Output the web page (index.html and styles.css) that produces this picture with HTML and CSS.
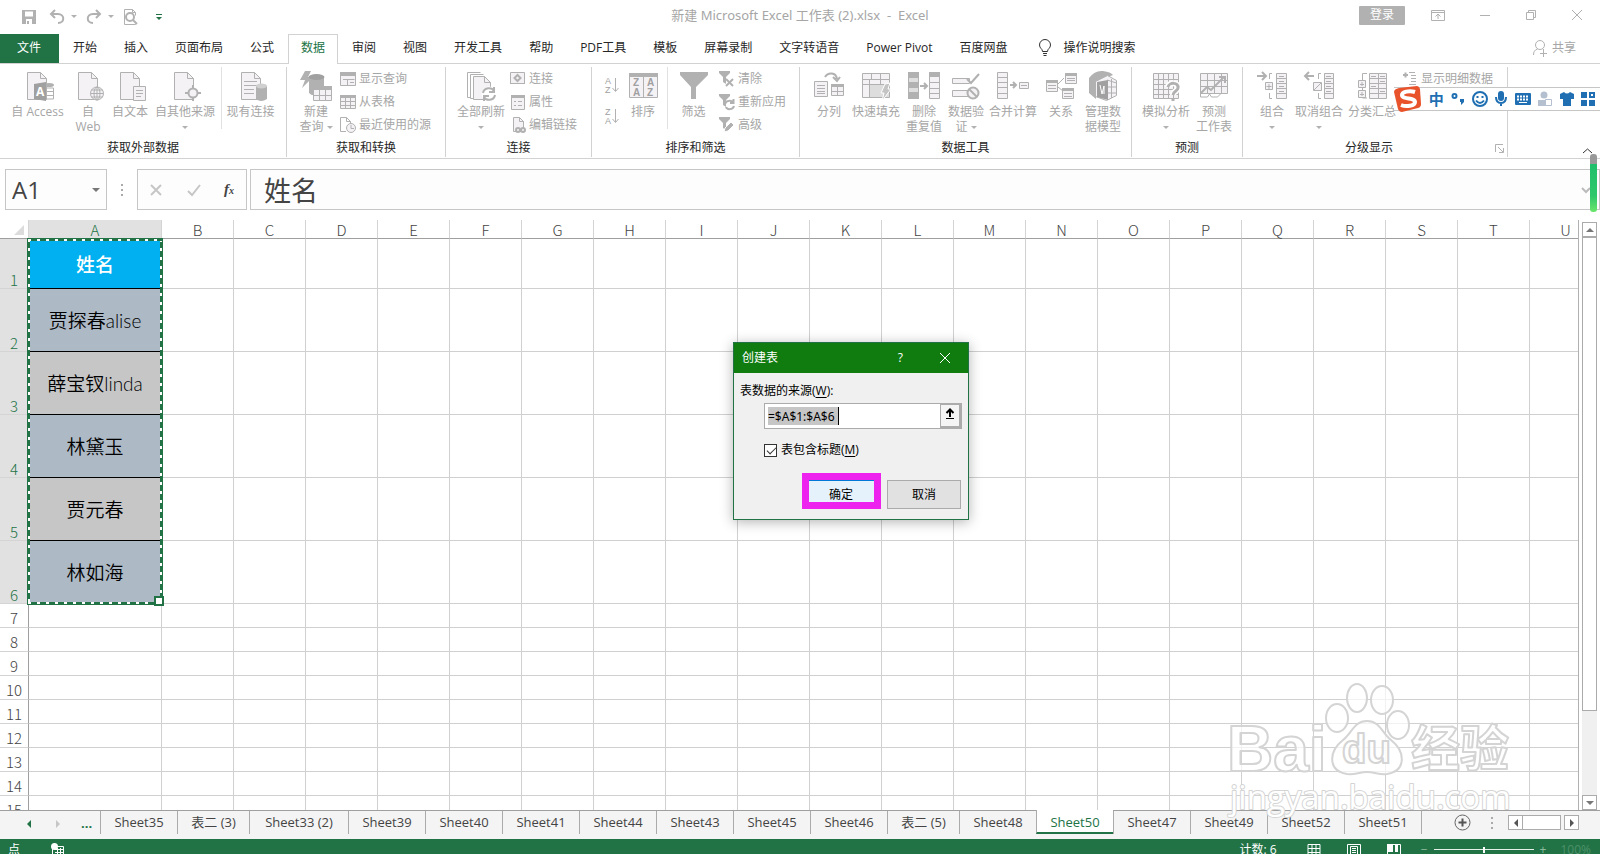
FILE: index.html
```
<!DOCTYPE html>
<html lang="zh-CN">
<head>
<meta charset="UTF-8">
<meta name="viewport" content="width=device-width, initial-scale=1">
<title>新建 Microsoft Excel 工作表 (2).xlsx - Excel</title>
<link rel="stylesheet" href="styles.css">
</head>
<body>

<!-- shared icon shapes -->
<svg class="sprite" aria-hidden="true">
  <symbol id="page" viewBox="0 0 30 30"><path class="pale" d="M2.500 1.500h13l6 6v21h-19z"/><path class="ln" d="M15.500 1.500v6h6"/></symbol>
  <symbol id="grid-sm" viewBox="0 0 16 16"><path class="pale" d="M.5 1.500h15v13H.5z"/><path class="fl" d="M0 1h16v3H0z"/><path class="ln" d="M0 7.500h16M0 11.500h16M5.500 4v11M10.500 4v11"/></symbol>
  <symbol id="funnel-sm" viewBox="0 0 16 16"><path class="fl" d="M0 0h11v2L7 6v7l-3-2V6L0 2z"/></symbol>
</svg>

<header class="titlebar">
  <div class="quick">
    <button aria-label="保存"><svg width="16" height="16"><path class="fl" d="M1 1h14v14H1zM4 2.500v5h8v-5zM5 10v5h6v-5z" fill-rule="evenodd"/><path class="fl" d="M6 12h2v3H6z"/></svg></button>
    <button aria-label="撤消"><svg width="16" height="16"><path class="ln bold" d="M6 1 2 5l4 4M2 5h7c7 0 7 9 0 9"/></svg></button>
    <i class="caret"></i>
    <button aria-label="恢复"><svg width="16" height="16"><path class="ln bold" d="m10 1 4 4-4 4M14 5H7c-7 0-7 9 0 9"/></svg></button>
    <i class="caret"></i>
    <button aria-label="打印预览"><svg width="16" height="18"><path class="ln" d="M13.500 15.500v1H2.500v-15h8l3 3v3M10.500 1.500v3h3"/><circle class="ln bold" cx="8" cy="9" r="4"/><path class="ln bold" d="m11 12 4 4"/></svg></button>
    <button aria-label="自定义快速访问工具栏"><svg width="8" height="10"><path d="M1 2.500h6" stroke="#217346"/><path d="M1 5h6L4 8z" fill="#217346"/></svg></button>
  </div>
  <h1>新建 Microsoft Excel 工作表 (2).xlsx &nbsp;- &nbsp;Excel</h1>
  <div class="window-controls">
    <button class="login">登录</button>
    <button aria-label="功能区显示选项"><svg width="14" height="12"><path class="ln" d="M.5 1.500h13v10H.5zM.5 3.500h13M7 10V5M4.500 7.500 7 5l2.500 2.500"/></svg></button>
    <button aria-label="最小化"><svg width="12" height="12"><path class="ln" d="M1 6.500h10"/></svg></button>
    <button aria-label="还原"><svg width="12" height="12"><path class="ln" d="M1.500 3.500h7v7h-7zM3.500 3V1.500h7v7H9"/></svg></button>
    <button aria-label="关闭"><svg width="12" height="12"><path class="ln" d="m1 1 10 10M11 1 1 11"/></svg></button>
  </div>
</header>

<nav class="tabs">
  <a class="file" href="#">文件</a>
  <a href="#">开始</a>
  <a href="#">插入</a>
  <a href="#">页面布局</a>
  <a href="#">公式</a>
  <a class="active" href="#">数据</a>
  <a href="#">审阅</a>
  <a href="#">视图</a>
  <a href="#">开发工具</a>
  <a href="#">帮助</a>
  <a href="#">PDF工具</a>
  <a href="#">模板</a>
  <a href="#">屏幕录制</a>
  <a href="#">文字转语音</a>
  <a href="#">Power Pivot</a>
  <a href="#">百度网盘</a>
  <a class="tell" href="#"><svg width="14" height="18"><path d="M4.500 12.500c0-3-3-3-3-6.500a5.500 5.500 0 0 1 11 0c0 3.500-3 3.500-3 6.500zM5 14.500h4M5.500 16.500h3" fill="none" stroke="#333"/></svg>操作说明搜索</a>
  <a class="share" href="#"><svg width="16" height="18"><circle class="ln" cx="8" cy="6" r="4.500"/><path class="ln" d="M1.500 16c0-3 1-5 4-6M11 10l1 1M8 14.500h7M11.500 11v7"/></svg>共享</a>
</nav>

<section class="ribbon">
  <div class="group external">
    <div class="items">
      <button class="big"><svg width="26" height="30"><use href="#page" width="30" height="30"/><ellipse class="fl" cx="24" cy="14" rx="5" ry="2"/><path class="ln" d="M20 17h8.500v11H20M20 20.500h8M20 24.500h8"/><path class="dk" d="m9 13 12-2v19L9 28z"/><text x="11" y="25" class="letter">A</text></svg><span>自 Access</span></button>
      <button class="big"><svg width="26" height="30"><use href="#page" x="1" width="30" height="30"/><circle class="pale" cx="22" cy="22.500" r="6.500"/><ellipse class="ln" cx="22" cy="22.500" rx="3" ry="6.500"/><path class="ln" d="M15.500 22.500h13M16.500 19h11M16.500 26h11M22 16v13"/></svg><span>自<br>Web</span></button>
      <button class="big"><svg width="26" height="30"><use href="#page" x="1" width="30" height="30"/><path class="pale" d="M16.500 15.500h12v14h-12z"/><path class="ln" d="M19 19.500h7M19 22.500h7M19 25.500h5"/></svg><span>自文本</span></button>
      <button class="big"><svg width="26" height="30"><use href="#page" width="30" height="30"/><circle class="pale thick" cx="21" cy="22" r="4.500"/><path class="ln thick" d="M21 14v3M21 27v3M13 22h3M26 22h3"/></svg><span>自其他来源</span><i class="caret"></i></button>
      <button class="big split"><svg width="26" height="30"><use href="#page" x="1" width="30" height="30"/><path class="ln" d="M6 10.500h13M6 14.500h13M6 18.500h10M6 22.500h10"/><path class="fl" d="M18 15v13q5 4 11 0V15z"/><ellipse cx="23.500" cy="15" rx="5.500" ry="2.500" fill="#d0d0d0"/></svg><span>现有连接</span></button>
    </div>
    <h2>获取外部数据</h2>
  </div>

  <div class="group transform">
    <div class="items">
      <button class="big"><svg width="34" height="30"><path class="fl" d="M6 0h6L9 6h5L3 17l3-8H1z"/><path class="fl" d="M10 7v15q3 3 6 2V15h9V7z"/><ellipse cx="17.500" cy="6" rx="8" ry="3" fill="#a0a0a0"/><path class="pale" d="M14.500 15.500h18v14h-18z"/><path class="fl" d="M14 15h19v4H14z"/><path class="ln" d="M14 24.500h19M20.500 19v11M26.500 19v11"/></svg><span>新建<br>查询 <i class="caret"></i></span></button>
      <div class="stack">
        <button><svg width="16" height="16"><path class="pale" d="M.5 1.500h15v13H.5z"/><path class="fl" d="M0 1h16v4H0z"/><path class="ln" d="M3 8.500h5M7.500 14V8.500h7M10 11.500h4"/></svg>显示查询</button>
        <button><svg width="16" height="16"><use href="#grid-sm"/></svg>从表格</button>
        <button><svg width="16" height="16"><path class="ln" d="M6 14.500H.5V.5h6l4 4v3M6.500.5v4h4"/><circle class="pale" cx="11" cy="11" r="4.500"/><path class="ln" d="M11 8v3.500h3"/></svg>最近使用的源</button>
      </div>
    </div>
    <h2>获取和转换</h2>
  </div>

  <div class="group links">
    <div class="items">
      <button class="big"><svg width="30" height="30"><path class="ln" d="M4 26.500H1.500v-25h13M7 27.500H4.500v-24h13"/><path class="pale" d="M7.500 5.500h11l6 6v17h-17z"/><path class="ln" d="M18.500 5.500v6h6"/><circle cx="23" cy="23" r="7.500" fill="#fff"/><path class="ln thick" d="M17 22c1-6 9-6 11-2M29 24c-1 6-9 6-11 2M28 16v5h-5M18 30v-5h5"/></svg><span>全部刷新</span><i class="caret"></i></button>
      <div class="stack">
        <button><svg width="16" height="16"><path class="pale" d="M.5 1.500h14v11H.5z"/><path class="ln thick" d="m7.500 4 3 3-3 3-3-3z"/><path class="ln" d="M0 12.500h15"/></svg>连接</button>
        <button><svg width="16" height="16"><path class="pale" d="M1.500 1.500h13v14h-13z"/><path class="fl" d="M1 1h14v3H1z"/><path class="ln" d="M4 7.500h2M8 7.500h4M4 11.500h2M8 11.500h4"/></svg>属性</button>
        <button><svg width="16" height="16"><path class="pale" d="M3.500.5h6l4 4v10h-10z"/><path class="ln" d="M9.500.5v4h4"/><circle class="pale thick" cx="8" cy="13" r="2"/><circle class="pale thick" cx="13" cy="13" r="2"/></svg>编辑链接</button>
      </div>
    </div>
    <h2>连接</h2>
  </div>

  <div class="group sort">
    <div class="items">
      <div class="sorters">
        <button aria-label="升序"><svg width="16" height="18"><text x="1" y="8" class="az">A</text><text x="1" y="17" class="az">Z</text><path class="ln" d="M11.500 2v13M8.500 12l3 3.500 3-3.500"/></svg></button>
        <button aria-label="降序"><svg width="16" height="18"><text x="1" y="8" class="az">Z</text><text x="1" y="17" class="az">A</text><path class="ln" d="M11.500 2v13M8.500 12l3 3.500 3-3.500"/></svg></button>
      </div>
      <button class="big"><svg width="30" height="30"><path class="pale" d="M1.500 2.500h28v24h-28z"/><path class="fl" d="M1 2h29v4H1z"/><path class="ln" d="M15.500 6v20"/><text x="5" y="15" class="az lg">Z</text><text x="5" y="25" class="az lg">A</text><text x="19" y="15" class="az lg">A</text><text x="19" y="25" class="az lg">Z</text></svg><span>排序</span></button>
      <button class="big split"><svg width="30" height="30"><path class="fl" d="M1 1h28v3L17 16v12h-5V16L1 4z"/></svg><span>筛选</span></button>
      <div class="stack">
        <button><svg width="16" height="16"><use href="#funnel-sm"/><path class="ln thick" d="m7 8 7 7M14 8l-7 7"/></svg>清除</button>
        <button><svg width="16" height="16"><use href="#funnel-sm"/><path class="ln thick" d="M6 10c1-4 7-4 8-1M15 12c-1 4-7 4-8 1M14.500 5v4H11"/></svg>重新应用</button>
        <button><svg width="16" height="16"><use href="#funnel-sm"/><path d="m5 15 1-4 6-6 3 3-6 6z" class="fl" stroke="#fff"/></svg>高级</button>
      </div>
    </div>
    <h2>排序和筛选</h2>
  </div>

  <div class="group tools">
    <div class="items">
      <button class="big"><svg width="30" height="30"><path class="ln thick" d="M11 6c3-5 11-5 12 2M19 6l4 4 3-4"/><path class="pale" d="M.5 10.500h13v15H.5z"/><path class="ln" d="M3 14.500h8M3 17.500h8M3 20.500h8M3 22.500h8"/><path class="pale" d="M17.500 13.500h12v11h-12z"/><path class="fl" d="M17 13h13v3H17z"/><path class="ln" d="M17 20.500h13M23.500 16v9"/></svg><span>分列</span></button>
      <button class="big"><svg width="30" height="30"><path class="pale" d="M1.500 2.500h27v24h-27z"/><path class="ln" d="M1 8.500h28M1 13.500h28M10.500 2v6M19.500 2v6M8.500 8v18M19.500 8v6"/><path fill="#ddd" d="M9 14h19v12H9z"/><path d="m24 13 5-1-2 6h3L21 30l2-8h-3z" fill="#c4c4c4" stroke="#fff"/></svg><span>快速填充</span></button>
      <button class="big"><svg width="32" height="30"><path class="fl" d="M0 1h11v27H0z"/><path d="M1 7h9v4H1zM1 17h9v4H1z" fill="#dedede"/><path class="pale" d="M21.500 1.500h10v26h-10z"/><path class="fl" d="M21 1h11v5H21z"/><path class="ln" d="M21 11.500h11M21 17.500h11M21 22.500h11"/><path class="ln thick" d="M12 15h7M16 12l3 3-3 3"/></svg><span>删除<br>重复值</span></button>
      <button class="big"><svg width="30" height="30"><path class="pale" d="M1.500 7.500h17v5h-17zM1.500 19.500h17v6h-17z"/><path class="ln bold" d="m16 8 4 4 8-9"/><circle class="pale thick" cx="22" cy="22" r="5.500"/><path class="ln thick" d="m18 18 8 8"/></svg><span>数据验<br>证 <i class="caret"></i></span></button>
      <button class="big"><svg width="34" height="30"><path class="pale" d="M1.500 1.500h10v26h-10z"/><path class="ln" d="M1 6.500h10M1 11.500h10M1 16.500h10M1 22.500h10"/><path class="ln thick" d="M14 14h6M17 11l3 3-3 3"/><path class="pale" d="M23.500 11.500h9v6h-9z"/><path class="ln" d="M25 14.500h6"/></svg><span>合并计算</span></button>
      <button class="big"><svg width="32" height="30"><path class="ln" d="m13 13 6-6M13 16l5 4"/><path class="pale" d="M1.500 9.500h11v11h-11zM20.500 2.500h11v10h-11zM17.500 17.500h11v10h-11z"/><path class="fl" d="M1 9h12v3H1zM20 2h12v3H20zM17 17h12v3H17z"/><path class="ln" d="M3 14.500h8M3 17.500h8M22 7.500h8M22 9.500h8M19 22.500h8M19 25.500h8"/></svg><span>关系</span></button>
      <button class="big"><svg width="30" height="30"><path class="fl" d="M1 7q6-8 14-7t10 4L8 11v17l-7-6z"/><path class="pale" d="m7.500 10.500 12-6 9 5v15l-10 5-11-4z"/><path class="ln" d="m19 9 9.500 3M19 16h9.500M19 22h9.500M23.500 8v19"/><path class="dk" d="m9 11 11-2v20L9 26z"/><path d="m12 14 2 9 2-8v8" fill="none" stroke="#fff"/></svg><span>管理数<br>据模型</span></button>
    </div>
    <h2>数据工具</h2>
  </div>

  <div class="group forecast">
    <div class="items">
      <button class="big"><svg width="30" height="30"><path class="pale" d="M2.500 2.500h25v25h-25z"/><path class="ln" d="M2 8.500h25M2 13.500h25M2 18.500h25M2 23.500h25M7.500 2v25M12.500 2v25M17.500 2v25M22.500 2v25"/><path fill="none" stroke="#fff" stroke-width="6" d="M17 16c1-5 11-5 10 1 0 3-5 3-5 7"/><path class="ln bolder" d="M17 16c1-5 11-5 10 1 0 3-5 3-5 7M22 27v3"/></svg><span>模拟分析</span><i class="caret"></i></button>
      <button class="big"><svg width="30" height="30"><path class="pale" d="M1.500 2.500h27v20h-27z"/><path class="ln" d="M1 9.500h27M1 15.500h27M8.500 2v20M15.500 2v20M22.500 2v20M1.500 22v4h7l2-3 2 3h6l3-3"/><path class="ln bold" d="m2 22 6-6 4 3 13-13M20 6h6v6"/></svg><span>预测<br>工作表</span></button>
    </div>
    <h2>预测</h2>
  </div>

  <div class="group outline">
    <div class="items">
      <button class="big"><svg width="32" height="30"><path class="ln bold" d="M1 5h8M6 1l4 4-4 4"/><path class="ln" d="M16 2.500h-2.500V8M16 27.500h-2.500V22"/><path class="pale" d="M9.500 11.500h7v7h-7zM20.500 2.500h10v25h-10z"/><path class="ln" d="M13 13v5M10.500 15.500h5M20 7.500h10M20 12.500h10M20 17.500h10M20 22.500h10M23 5.500h5M23 10.500h5M23 15.500h5M23 20.500h5"/></svg><span>组合</span><i class="caret"></i></button>
      <button class="big"><svg width="32" height="30"><path class="ln bold" d="M2 5h9M6 1 2 5l4 4"/><path class="ln" d="M18 2.500h-2.500V8M18 27.500h-2.500V22"/><path class="pale" d="M10.500 11.500h8v8h-8zM21.500 2.500h9v25h-9z"/><path class="ln" d="m11 19 7-7M21 7.500h10M21 12.500h10M21 17.500h10M21 22.500h10M23 5.500h5M23 10.500h5M23 15.500h5M23 20.500h5"/></svg><span>取消组合</span><i class="caret"></i></button>
      <button class="big"><svg width="30" height="30"><path class="ln" d="M10 2.500H5.500V27H10"/><path class="pale" d="M1.500 9.500h7v7h-7zM1.500 19.500h7v7h-7zM12.500 2.500h17v25h-17z"/><path class="ln" d="M5 11v4M3 13.500h4M5 21v4M3 23.500h4M12 7.500h17M12 12.500h17M12 17.500h17M12 22.500h17M21.500 2v25M14 5.500h5M14 15.500h5M23 5.500h5M23 10.500h5M23 20.500h5"/></svg><span>分类汇总</span></button>
      <div class="stack">
        <button><svg width="16" height="16"><path class="ln thick" d="M1 4h5M3.500 1.500v5"/><path class="ln" d="M7 1.500h6M9 4.500h5M9 7.500h5M9 10.500h5M7 13.500h7"/></svg>显示明细数据</button>
      </div>
    </div>
    <h2><span>分级显示</span><button class="launcher" aria-label="分级显示设置"><svg width="9" height="9"><path class="ln" d="M.5 8V.5H8M3 3l5 5M8.500 4v4.500H4"/></svg></button></h2>
  </div>
  <button class="collapse" aria-label="折叠功能区"><svg width="11" height="6"><path d="m1 5 4.500-4L10 5" fill="none" stroke="#333"/></svg></button>
</section>

<section class="formula">
  <div class="namebox"><input type="text" value="A1" aria-label="名称框"><i class="caret"></i></div>
  <svg class="grip" width="4" height="12"><path d="M2 0v12" stroke="#aaa" stroke-width="2" stroke-dasharray="2 3"/></svg>
  <div class="entry">
    <button aria-label="取消"><svg width="14" height="14"><path d="m2 2 10 10M12 2 2 12" fill="none" stroke="#c6c6c6" stroke-width="2"/></svg></button>
    <button aria-label="输入"><svg width="14" height="14"><path d="m1 8 4 4 8-10" fill="none" stroke="#c6c6c6" stroke-width="2"/></svg></button>
    <button class="fx" aria-label="插入函数">f<small>x</small></button>
  </div>
  <div class="content"><input type="text" value="姓名" aria-label="编辑栏"><svg width="10" height="8"><path d="m1 2 4 4 4-4" fill="none" stroke="#bbb" stroke-width="2"/></svg></div>
</section>

<main class="workspace">
  <div class="sheet">
    <table id="cells"></table>
    <div class="marquee"></div>
  </div>
  <div class="vscroll">
    <button aria-label="向上滚动"><i class="up"></i></button>
    <div class="track"><div class="thumb"></div></div>
    <button aria-label="向下滚动"><i class="down"></i></button>
  </div>
</main>

<footer>
  <nav class="sheets">
    <div class="pager">
      <button aria-label="上一张"><i class="left"></i></button>
      <button aria-label="下一张" disabled><i class="right"></i></button>
      <button class="more" aria-label="更多工作表">...</button>
    </div>
    <a href="#">Sheet35</a>
    <a class="short" href="#">表二 (3)</a>
    <a class="long" href="#">Sheet33 (2)</a>
    <a href="#">Sheet39</a>
    <a href="#">Sheet40</a>
    <a href="#">Sheet41</a>
    <a href="#">Sheet44</a>
    <a href="#">Sheet43</a>
    <a href="#">Sheet45</a>
    <a href="#">Sheet46</a>
    <a class="short" href="#">表二 (5)</a>
    <a href="#">Sheet48</a>
    <a class="active" href="#">Sheet50</a>
    <a href="#">Sheet47</a>
    <a href="#">Sheet49</a>
    <a href="#">Sheet52</a>
    <a href="#">Sheet51</a>
    <div class="sheet-end">
      <button aria-label="新工作表"><svg width="17" height="17"><circle cx="8.500" cy="8.500" r="7.500" fill="none" stroke="#666"/><path d="M8.500 4.500v8M4.500 8.500h8" stroke="#555" stroke-width="2"/></svg></button>
      <svg class="grip" width="4" height="12"><path d="M2 0v12" stroke="#aaa" stroke-width="2" stroke-dasharray="2 3"/></svg>
      <div class="hscroll">
        <button aria-label="向左滚动"><i class="left"></i></button>
        <div class="thumb"></div>
        <button aria-label="向右滚动"><i class="right"></i></button>
      </div>
    </div>
  </nav>
  <div class="status">
    <span>点</span>
    <svg width="14" height="14"><path d="M1.500 3.500h11v10h-11zM4 6.500h8M4 9.500h8M4 11.500h8M6.500 5v8M9.500 5v8" fill="none" stroke="#fff"/><circle cx="3.500" cy="3.500" r="3.500" fill="#fff"/></svg>
    <span class="count">计数: 6</span>
    <button aria-label="普通"><svg width="14" height="14"><path d="M1 1.500h12v12H1zM1 5.500h12M1 9.500h12M5 1v12M9 1v12" fill="none" stroke="#fff"/></svg></button>
    <button aria-label="页面布局"><svg width="14" height="14"><path d="M.5 1.500h13v12H.5zM3.500 3.500h7v8h-7zM5 5.500h4M5 7.500h4M5 9.500h4" fill="none" stroke="#fff"/></svg></button>
    <button aria-label="分页预览"><svg width="14" height="14"><path d="M0 1h6v8H0zM8 1h3v8H8z" fill="#fff"/><path d="M.5 1.500h13v12H.5z" fill="none" stroke="#fff"/></svg></button>
    <div class="zoom"><span>−</span><input type="range" min="10" max="190" value="100" aria-label="缩放"><span>+</span></div>
    <span class="percent">100%</span>
  </div>
</footer>

<form class="dialog">
  <div class="dialog-title"><h2>创建表</h2><button type="button" aria-label="帮助">?</button><button type="button" aria-label="关闭"><svg width="12" height="12"><path d="m1 1 10 10M11 1 1 11" stroke="#fff"/></svg></button></div>
  <div class="dialog-body">
    <label for="source">表数据的来源(<u>W</u>):</label>
    <div class="range">
      <div class="range-text"><input id="source" type="text" value="=$A$1:$A$6"></div>
      <button type="button" aria-label="折叠对话框"><svg width="12" height="12"><path d="M6 9V2M2.500 5 6 1.500 9.500 5" fill="none" stroke="#000" stroke-width="2"/><path d="M2 10.500h8" stroke="#000"/></svg></button>
    </div>
    <label class="check"><input type="checkbox" checked><span>表包含标题(<u>M</u>)</span></label>
    <div class="actions">
      <button type="button" class="ok">确定</button>
      <button type="button">取消</button>
    </div>
  </div>
</form>

<div class="ime">
  <svg class="ime-logo" width="28" height="28" viewBox="0 0 28 28"><path d="m5 3 18-2q2 0 3 3l1 15q0 3-3 4L8 27q-3 0-4-3L0 7q0-3 5-4z" fill="#e9532b"/><path d="M21 7c-6-2-13 0-13 3 0 5 13 2 13 7 0 4-9 5-14 3" fill="none" stroke="#fff" stroke-width="4"/></svg>
  <span>中</span>
  <svg width="14" height="16"><circle cx="3.500" cy="5" r="2" fill="none" stroke="#1f6fb2" stroke-width="2"/><path d="M9 8h4v3l-3 3V11H9z" fill="#1f6fb2"/></svg>
  <svg width="16" height="16"><circle cx="8" cy="8" r="7" fill="none" stroke="#1f6fb2" stroke-width="2"/><path d="M5.500 5v2M10.500 5v2M4 9.500q4 5 8 0" fill="none" stroke="#1f6fb2" stroke-width="2"/></svg>
  <svg width="14" height="16"><rect x="4" y="0" width="6" height="10" rx="3" fill="#1f6fb2"/><path d="M2 6q0 6 5 6t5-6M7 12v3" fill="none" stroke="#1f6fb2" stroke-width="2"/></svg>
  <svg width="16" height="16"><rect y="2" width="16" height="12" rx="1" fill="#1f6fb2"/><path d="M2 5.500h12M2 8.500h12" stroke="#fff" stroke-width="2" stroke-dasharray="2 1"/><path d="M4 11.500h8" stroke="#fff"/></svg>
  <svg width="15" height="16"><circle cx="6" cy="4" r="3.500" fill="#b4bfd0"/><path d="M0 15V9h12v6z" fill="#b4bfd0"/><path d="M7.500 8.500h6v6h-6z" fill="#fff" stroke="#b4bfd0"/></svg>
  <svg width="14" height="16"><path d="M0 3 4 1q3 3 6 0l4 2v5h-3v7H3V8H0z" fill="#1f6fb2"/></svg>
  <svg width="14" height="16"><path d="M0 1h6v6H0zM0 9h6v6H0zM8 9h6v6H8z" fill="#1f6fb2"/><path d="M9 2h4v4H9z" fill="none" stroke="#1f6fb2" stroke-width="2"/></svg>
</div>
<div class="gauge"></div>

<svg class="watermark" width="300" height="145" viewBox="0 0 300 145">
  <g>
    <ellipse cx="112" cy="43" rx="11" ry="14"/><ellipse cx="132" cy="23" rx="10" ry="14"/><ellipse cx="157" cy="25" rx="11" ry="14"/><ellipse cx="173" cy="50" rx="11" ry="14"/>
    <path d="M142 46c13 0 15 12 24 19 15 12 15 31-4 34-8 1-12-2-20-2s-12 3-20 2c-19-3-19-22-4-34 9-7 11-19 24-19z"/>
    <text class="logo" x="2" y="96">Bai</text>
    <text class="logo-du" x="117" y="88">du</text>
    <text class="logo-cn" x="186" y="91">经验</text>
    <text class="logo-url" x="5" y="134">jingyan.baidu.com</text>
  </g>
</svg>

<script src="grid.js"></script>
</body>
</html>
```
FILE: styles.css
```
* { box-sizing: border-box; }
html { height: 100%; }
body {
  display: flex;
  flex-direction: column;
  position: relative;
  height: 100%;
  margin: 0;
  overflow: hidden;
  background: #fff;
  color: #262626;
  font: 12px/16px "Open Sans", "Noto Sans CJK SC", sans-serif;
}
h1, h2 { margin: 0; font-size: 12px; font-weight: normal; }
a { color: inherit; text-decoration: none; }
button {
  padding: 0;
  border: 0;
  background: none;
  color: inherit;
  font: inherit;
}
input { font: inherit; color: inherit; }
svg { display: block; flex: none; overflow: visible; }
.sprite { position: absolute; width: 0; height: 0; }

/* icon paint */
.ln { fill: none; stroke: #b1b1b1; }
.fl { fill: #b1b1b1; }
.dk { fill: #a0a0a0; }
.pale { fill: #f5f2f6; stroke: #b1b1b1; }
.thick { stroke-width: 2; }
.bold { stroke-width: 2; }
.bolder { stroke-width: 3; }
.letter { font: bold 12px "Open Sans", sans-serif; fill: #fff; }
.az { font: 9px "Liberation Sans", sans-serif; fill: #a0a0a0; }
.az.lg { font-size: 10px; font-weight: bold; }

.caret, .up, .down, .left, .right {
  display: inline-block;
  flex: none;
  border: 3px solid transparent;
}
.caret { border-top-color: #b1b1b1; border-bottom: 0; }
.up { border-bottom-color: #777; border-width: 0 4px 4px; }
.down { border-top-color: #777; border-width: 4px 4px 0; }
.left { border-right-color: #555; border-width: 4px 4px 4px 0; }
.right { border-left-color: #555; border-width: 4px 0 4px 4px; }

/* title bar */
.titlebar {
  display: grid;
  grid-template-columns: 1fr auto 1fr;
  align-items: center;
  flex: none;
  height: 34px;
  padding: 0 21px 4px;
  color: #a6a6a6;
}
.titlebar h1 { font-family: "Noto Sans", "Noto Sans CJK SC", sans-serif; font-size: 13px; }
.quick { display: flex; align-items: center; gap: 6px; padding-top: 3px; }
.quick button:nth-of-type(2) { margin-left: 6px; }
.quick button:nth-of-type(3) { margin-left: 3px; }
.quick button:nth-of-type(4) { margin-left: 2px; }
.quick button:last-child { margin-left: 11px; }
.window-controls { display: flex; align-items: center; justify-content: flex-end; gap: 34px; margin-right: -4px; }
.login {
  width: 46px;
  height: 19px;
  margin-right: -8px;
  border-radius: 1px;
  background: #b1b1b1;
  color: #fff;
}

/* ribbon tabs */
.tabs {
  display: flex;
  flex: none;
  gap: 3px;
  height: 30px;
  border-bottom: 1px solid #d2d2d2;
}
.tabs a { padding: 6px 12px; white-space: nowrap; }
.tabs .file { width: 59px; margin-right: -1px; padding: 6px 17px; background: #217346; color: #fff; }
.tabs .active {
  height: 30px;
  margin: 0 -1px;
  border: 1px solid #d2d2d2;
  border-bottom: 0;
  background: #fff;
  color: #217346;
  padding-top: 5px;
}
.tabs .tell, .tabs .share { display: flex; align-items: center; gap: 12px; padding-top: 0; padding-bottom: 1px; }
.tabs .tell { margin-left: 3px; }
.tabs .share { gap: 4px; margin-left: auto; margin-right: 12px; color: #a6a6a6; }

/* ribbon */
.ribbon {
  display: flex;
  flex: none;
  height: 95px;
  border-bottom: 1px solid #d2d2d2;
  color: #a6a6a6;
}
.group {
  display: flex;
  flex-direction: column;
  flex: none;
  height: 90px;
  margin-top: 3px;
  border-right: 1px solid #d2d2d2;
}
.items { display: grid; flex: 1; align-items: start; }
.group h2 {
  display: flex;
  justify-content: center;
  height: 17px;
  color: #262626;
}
.group h2 span { margin: 0 auto; }
.launcher { margin-right: 3px; }
.external { width: 287px; }
.external .items { grid-template-columns: 67px 34px 50px 60px 64px; padding-left: 4px; }
.transform { width: 159px; }
.transform .items { grid-template-columns: 48px 1fr; padding-left: 5px; }
.links { width: 146px; }
.links .items { grid-template-columns: 58px 1fr; padding-left: 6px; }
.sort { width: 208px; }
.sort .items { grid-template-columns: 21px 36px 58px 1fr; padding-left: 12px; }
.tools { width: 332px; }
.tools .items { grid-template-columns: 42px 52px 44px 40px 54px 42px 42px; padding-left: 8px; }
.forecast { width: 111px; }
.forecast .items { grid-template-columns: 56px 40px; padding-left: 6px; }
.outline { width: 265px; }
.outline .items { grid-template-columns: 42px 52px 54px 1fr; padding-left: 8px; }

.big {
  display: flex;
  flex-direction: column;
  align-items: center;
  padding-top: 4px;
  line-height: 15px;
  white-space: nowrap;
}
.big svg { margin-bottom: 3px; }
.big > .caret { margin-top: 7px; }
.big .caret { vertical-align: middle; }
.split {
  margin-left: 6px;
  border-left: 1px solid #e1e1e1;
  height: 62px;
}
.stack { display: flex; flex-direction: column; align-items: flex-start; }
.stack button {
  display: flex;
  align-items: center;
  gap: 3px;
  height: 23px;
  white-space: nowrap;
}
.outline .stack { padding-left: 3px; }
.sorters { display: flex; flex-direction: column; gap: 13px; padding-top: 9px; }
.collapse { align-self: flex-end; margin-left: auto; margin-right: 7px; padding-bottom: 4px; }

/* formula bar */
.formula {
  display: flex;
  align-items: center;
  flex: none;
  height: 61px;
  padding: 0 0 0 5px;
  color: #444;
}
.formula > div {
  display: flex;
  align-items: center;
  height: 41px;
  border: 1px solid #c6c6c6;
  background: #fdfdfd;
}
.formula input { min-width: 0; border: 0; background: none; padding: 0; }
.namebox { width: 102px; padding: 0 6px; font-size: 24px; }
.namebox input { flex: 1; width: 60px; }
.namebox .caret { border-top-color: #777; border-width: 4px 4px 0; }
.grip { margin: 0 13px; }
.entry { width: 110px; justify-content: space-between; padding: 0 12px 0 11px; }
.fx { font: italic bold 15px "Liberation Serif", serif; }
.fx small { font-size: 10px; }
.content { flex: 1; margin-left: 3px; padding: 0 8px 0 13px; font-size: 27px; }
.content input { flex: 1; height: 38px; }

/* worksheet */
.workspace { display: flex; flex: 1; min-height: 0; }
.sheet {
  position: relative;
  flex: 1;
  min-width: 0;
  overflow: hidden;
  border-right: 1px solid #b1b1b1;
}
#cells {
  width: 1602px;
  border-collapse: separate;
  border-spacing: 0;
  table-layout: fixed;
  font: 15px/20px "Noto Sans CJK SC", sans-serif;
}
#cells col { width: 72px; }
#cells .col-index { width: 29px; }
#cells .col-a { width: 133px; }
#cells th {
  padding: 0;
  border: 0 solid #d4d4d4;
  border-right-width: 1px;
  color: #444;
  font-weight: 300;
  vertical-align: bottom;
}
#cells thead th { height: 19px; line-height: 17px; border-bottom: 1px solid #9f9f9f; }
#cells tbody th { line-height: 19px; border-bottom-width: 1px; border-right-color: #9f9f9f; }
#cells .selected { line-height: 17px; background: #e1e1e1; color: #217346; }
#cells td {
  padding: 0;
  border: 0 solid #d0d0d0;
  border-right-width: 1px;
  border-bottom-width: 1px;
  text-align: center;
}
#cells tr { height: 24px; }
#cells thead tr { height: 19px; }
#cells .head { height: 50px; }
#cells .person { height: 63px; }
#cells .filled {
  padding-top: 2px;
  border-color: #000;
  background: #c6c6c6;
  color: #000;
  font-family: Lato, "Noto Sans CJK SC", sans-serif;
  font-size: 19px;
  font-weight: 350;
  line-height: 24px;
}
#cells .head .filled { background: #00b0f0; color: #fff; font-weight: 500; }
#cells .person:nth-child(even) .filled { background: #adb9c5; }
.corner::after {
  content: "";
  display: block;
  width: 0;
  margin: 0 0 3px 14px;
  border: 5px solid #dcdcdc;
  border-top-color: transparent;
  border-left-color: transparent;
}
/* copy marquee round A1:A6 */
.marquee {
  position: absolute;
  left: 27px;
  top: 18px;
  width: 136px;
  height: 367px;
  border: 3px solid #217346;
}
.marquee::before {
  content: "";
  position: absolute;
  inset: -2px;
  background:
    repeating-linear-gradient(90deg, #fff 0 3px, #217346 3px 9px) top / 100% 2px no-repeat,
    repeating-linear-gradient(90deg, #fff 0 3px, #217346 3px 9px) bottom / 100% 2px no-repeat,
    repeating-linear-gradient(#fff 0 3px, #217346 3px 9px) left / 2px 100% no-repeat,
    repeating-linear-gradient(#fff 0 3px, #217346 3px 9px) right / 2px 100% no-repeat;
}
.marquee::after {
  content: "";
  position: absolute;
  right: -4px;
  bottom: -4px;
  width: 6px;
  height: 6px;
  border: 2px solid #217346;
  background: #fff;
}

.vscroll { display: flex; flex-direction: column; width: 15px; margin: 2px 3px 0; }
.vscroll button, .hscroll button {
  display: flex;
  align-items: center;
  justify-content: center;
  flex: none;
  width: 15px;
  height: 15px;
  border: 1px solid #ababab;
  background: #fff;
}
.track { flex: 1; background: #f0f0f0; }
.thumb { border: 1px solid #ababab; background: #fff; }
.track .thumb { height: 85%; }

/* sheet tabs */
footer { flex: none; }
.sheets {
  display: flex;
  height: 29px;
  padding-bottom: 5px;
  border-top: 1px solid #9f9f9f;
  background: #f4f4f4;
  color: #444;
  font-size: 13px;
}
.pager { display: flex; align-items: center; width: 100px; padding-left: 27px; }
.pager button { margin-right: 25px; }
.pager button:disabled { margin-right: 21px; }
.pager .more { margin: 0; color: #217346; font-weight: bold; line-height: 14px; }
.pager .left { border-right-color: #217346; }
.pager .right { border-left-color: #c6c6c6; }
.sheets a {
  position: relative;
  flex: none;
  width: 77px;
  padding-top: 3px;
  border-left: 1px solid #ababab;
  text-align: center;
  white-space: nowrap;
}
.sheets .short { width: 72px; }
.sheets .long { width: 99px; }
.sheets .active {
  height: 24px;
  margin-top: -1px;
  padding-top: 4px;
  border-bottom: 2px solid #217346;
  background: #fff;
  color: #217346;
}
.sheet-end { display: flex; align-items: center; flex: 1; border-left: 1px solid #ababab; }
.sheet-end > button { margin-left: auto; }
.sheet-end .grip { margin: 0 14px 0 19px; }
.hscroll { display: flex; margin-right: 21px; }
.hscroll .thumb { width: 39px; margin: 0 3px 0 -1px; }

.status {
  display: flex;
  align-items: center;
  height: 15px;
  padding: 6px 9px 0 8px;
  overflow: hidden;
  background: #217346;
  color: #fff;
}
.status > svg { margin-left: 31px; }
.count { margin-left: auto; margin-right: 4px; }
.status > button { margin-left: 26px; }
.zoom { display: flex; align-items: center; gap: 6px; margin: 0 14px 0 20px; color: #8dbb9f; }
.zoom input {
  width: 100px;
  height: 12px;
  margin: 0;
  appearance: none;
  background: linear-gradient(#e4f0e8, #e4f0e8) center / 100% 1px no-repeat;
}
.zoom input::-webkit-slider-thumb { appearance: none; width: 2px; height: 6px; background: #fff; }
.percent { color: #4d9069; }

/* create table dialog */
.dialog {
  position: absolute;
  left: 733px;
  top: 342px;
  width: 236px;
  border: 1px solid #217346;
  background: #f0f0f0;
  box-shadow: 0 2px 12px rgba(0, 0, 0, 0.3);
  color: #000;
}
.dialog-title {
  display: flex;
  align-items: center;
  height: 30px;
  padding: 0 17px 0 8px;
  background: #107c10;
  color: #fff;
}
.dialog-title h2 { flex: 1; }
.dialog-title button + button { margin-left: 36px; }
.dialog-body { padding: 10px 7px 10px 6px; }
.range {
  display: flex;
  height: 26px;
  margin: 4px -1px 0 24px;
  border: 1px solid #ababab;
  background: #fff;
}
.range-text { flex: 1; padding: 2px 3px; }
.range input {
  width: 71px;
  height: 18px;
  padding: 0;
  border: 0;
  border-right: 1px solid #000;
  background: #c6c6c6;
  margin-top: 1px;
  font-family: "Noto Sans", sans-serif;
}
.range button {
  display: flex;
  justify-content: center;
  width: 21px;
  padding-top: 3px;
  border: 2px solid #ababab;
  border-width: 1px 2px 2px 1px;
  background: #f4f4f4;
}
.check { display: flex; align-items: center; gap: 4px; margin: 13px 0 0 24px; }
.dialog u { text-underline-offset: 2px; }
.check input {
  width: 13px;
  height: 13px;
  margin: 0;
  appearance: none;
  border: 1px solid #333;
  background: #fff;
}
.check input:checked::after {
  content: "";
  display: block;
  width: 4px;
  height: 8px;
  margin: 0 0 0 4px;
  border: solid #333;
  border-width: 0 1px 1px 0;
  transform: rotate(45deg);
}
.actions { display: flex; justify-content: flex-end; gap: 8px; margin-top: 22px; }
.actions button {
  position: relative;
  width: 74px;
  height: 29px;
  border: 1px solid #ababab;
  background: #e1e1e1;
}
.actions .ok { width: 76px; border-color: #0078d7; background: #e5f1fb; }
/* highlight frame drawn over the confirm button */
.ok::after {
  content: "";
  position: absolute;
  inset: -8px -3px -1px -2px;
  border: 7px solid #ee22ee;
}

/* input method bar */
.ime {
  position: absolute;
  right: 0;
  top: 87px;
  display: flex;
  align-items: center;
  justify-content: space-between;
  width: 206px;
  height: 24px;
  padding-right: 5px;
  border: 1px solid #c6c6c6;
  border-width: 1px 0;
  background: #fff;
  color: #1f6fb2;
  font-size: 15px;
  font-weight: bold;
}
.gauge {
  position: absolute;
  right: 3px;
  top: 154px;
  width: 7px;
  height: 58px;
  border-radius: 3px;
  background: linear-gradient(#999 10px, #1fbf6b 10px, #2fc76a 42px, #6be56b);
}

.watermark { position: absolute; right: 75px; bottom: 34px; pointer-events: none; }
.watermark g {
  fill: rgba(255, 255, 255, 0.7);
  stroke: #d4d4d4;
  stroke-width: 2;
  stroke-linejoin: round;
}
.logo { font: bold 64px "Liberation Sans", sans-serif; }
.logo-du { font: bold 40px "Liberation Sans", sans-serif; }
.logo-cn { font: bold 49px "Noto Sans CJK SC", sans-serif; }
.logo-url { font: 33px "Open Sans", sans-serif; fill: #fff; paint-order: stroke; }
```
FILE: grid.js
```
const people = ["姓名", "贾探春alise", "薛宝钗linda", "林黛玉", "贾元春", "林如海"];
const letters = "ABCDEFGHIJKLMNOPQRSTU".split("");
const rowCount = 15;

let html = '<colgroup><col class="col-index"><col class="col-a"><col span="20"></colgroup>';
html += '<thead><tr><th class="corner"></th>';
letters.forEach((letter, i) => {
  html += `<th${i === 0 ? ' class="selected"' : ""}>${letter}</th>`;
});
html += "</tr></thead><tbody>";

for (let r = 0; r < rowCount; r++) {
  const used = r < people.length;
  const rowClass = r === 0 ? "head" : used ? "person" : "";
  html += `<tr class="${rowClass}"><th${used ? ' class="selected"' : ""}>${r + 1}</th>`;
  letters.forEach((letter, i) => {
    html += i === 0 && used ? `<td class="filled">${people[r]}</td>` : "<td></td>";
  });
  html += "</tr>";
}

document.getElementById("cells").innerHTML = html + "</tbody>";
```
